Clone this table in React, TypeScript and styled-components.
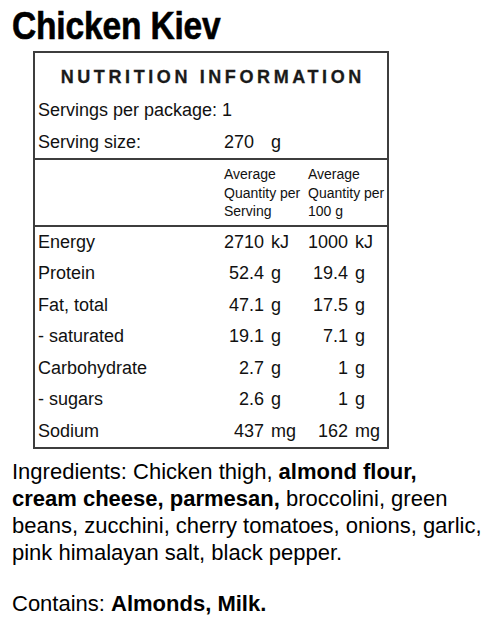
import styled, { createGlobalStyle } from "styled-components";

const GlobalStyle = createGlobalStyle`
  html, body {
    margin: 0;
    padding: 0;
    overflow: hidden;
    background: #ffffff;
  }
  body {
    font-family: "Liberation Sans", Arial, sans-serif;
    color: #000000;
  }
`;

const columns = "186px 40px 44px 40px 1fr";

const nutrients = [
  { name: "Energy", serving: "2710", per100: "1000", unit: "kJ" },
  { name: "Protein", serving: "52.4", per100: "19.4", unit: "g" },
  { name: "Fat, total", serving: "47.1", per100: "17.5", unit: "g" },
  { name: "- saturated", serving: "19.1", per100: "7.1", unit: "g" },
  { name: "Carbohydrate", serving: "2.7", per100: "1", unit: "g" },
  { name: "- sugars", serving: "2.6", per100: "1", unit: "g" },
  { name: "Sodium", serving: "437", per100: "162", unit: "mg" },
];

export default function App() {
  return (
    <Page>
      <GlobalStyle />
      <Title>Chicken Kiev</Title>

      <Panel>
        <PanelHeading>NUTRITION INFORMATION</PanelHeading>

        <Servings>
          <Row>
            <Label>Servings per package: 1</Label>
          </Row>
          <Row>
            <Label>Serving size:</Label>
            <Amount align="left">270</Amount>
            <Unit>g</Unit>
          </Row>
        </Servings>

        <ColumnHead>
          <span />
          <HeadCell>
            <div>Average</div>
            <div>Quantity per</div>
            <div>Serving</div>
          </HeadCell>
          <HeadCell>
            <div>Average</div>
            <div>Quantity per</div>
            <div>100 g</div>
          </HeadCell>
        </ColumnHead>

        <Rows>
          {nutrients.map((n) => (
            <Row key={n.name}>
              <Label>{n.name}</Label>
              <Amount>{n.serving}</Amount>
              <Unit>{n.unit}</Unit>
              <Amount>{n.per100}</Amount>
              <Unit>{n.unit}</Unit>
            </Row>
          ))}
        </Rows>
      </Panel>

      <Ingredients>
        Ingredients: Chicken thigh, <strong>almond flour,</strong> <strong>cream cheese, parmesan,</strong>{" "}
        broccolini, green beans, zucchini, cherry tomatoes, onions, garlic, pink himalayan salt, black pepper.
      </Ingredients>
      <Contains>
        Contains: <strong>Almonds, Milk.</strong>
      </Contains>
    </Page>
  );
}

const Page = styled.main`
  padding: 3px 0 0 12px;
  width: 484px;
  box-sizing: border-box;
`;

// no condensed face is installed, so the bold face is narrowed by hand
const Title = styled.h1`
  margin: 0;
  font-family: "Liberation Sans", Arial, sans-serif;
  font-size: 39px;
  line-height: 46px;
  font-weight: 700;
  letter-spacing: -0.2px;
  transform: scaleX(0.86);
  transform-origin: left center;
  -webkit-text-stroke: 0.6px #000000;
`;

const Panel = styled.section`
  margin: 2px 0 0 21px;
  width: 356px;
  box-sizing: border-box;
  border: 2px solid #3d3d3d;
  color: #111111;
`;

const PanelHeading = styled.h2`
  margin: 0;
  padding: 12px 0 0 3.6px;
  font-size: 18px;
  line-height: 24px;
  font-weight: 700;
  letter-spacing: 3.6px;
  text-align: center;
  color: #1a1a1a;
  -webkit-text-stroke: 0.3px #1a1a1a;
`;

const Servings = styled.div`
  margin-top: 6px;
  border-bottom: 2px solid #3d3d3d;
`;

const Row = styled.div`
  display: grid;
  grid-template-columns: ${columns};
  padding-left: 3px;
  font-size: 18px;
  line-height: 31.5px;
  white-space: nowrap;
`;

const Label = styled.span`
  grid-column: 1;
`;

const Amount = styled.span<{ align?: "left" | "right" }>`
  text-align: ${(props) => props.align ?? "right"};
`;

const Unit = styled.span`
  padding-left: 7px;
`;

const ColumnHead = styled.div`
  display: grid;
  grid-template-columns: 186px 84px 1fr;
  padding: 5px 0 4px 3px;
  border-bottom: 2px solid #3d3d3d;
  font-size: 14px;
  line-height: 18.5px;
  white-space: nowrap;
`;

const HeadCell = styled.div`
  display: flex;
  flex-direction: column;
`;

const Rows = styled.div`
  display: flex;
  flex-direction: column;
`;

const Ingredients = styled.p`
  margin: 9px 0 0;
  padding-right: 2px;
  font-size: 22px;
  line-height: 27px;

  strong {
    font-weight: 700;
  }
`;

const Contains = styled(Ingredients)`
  margin-top: 24px;
`;
